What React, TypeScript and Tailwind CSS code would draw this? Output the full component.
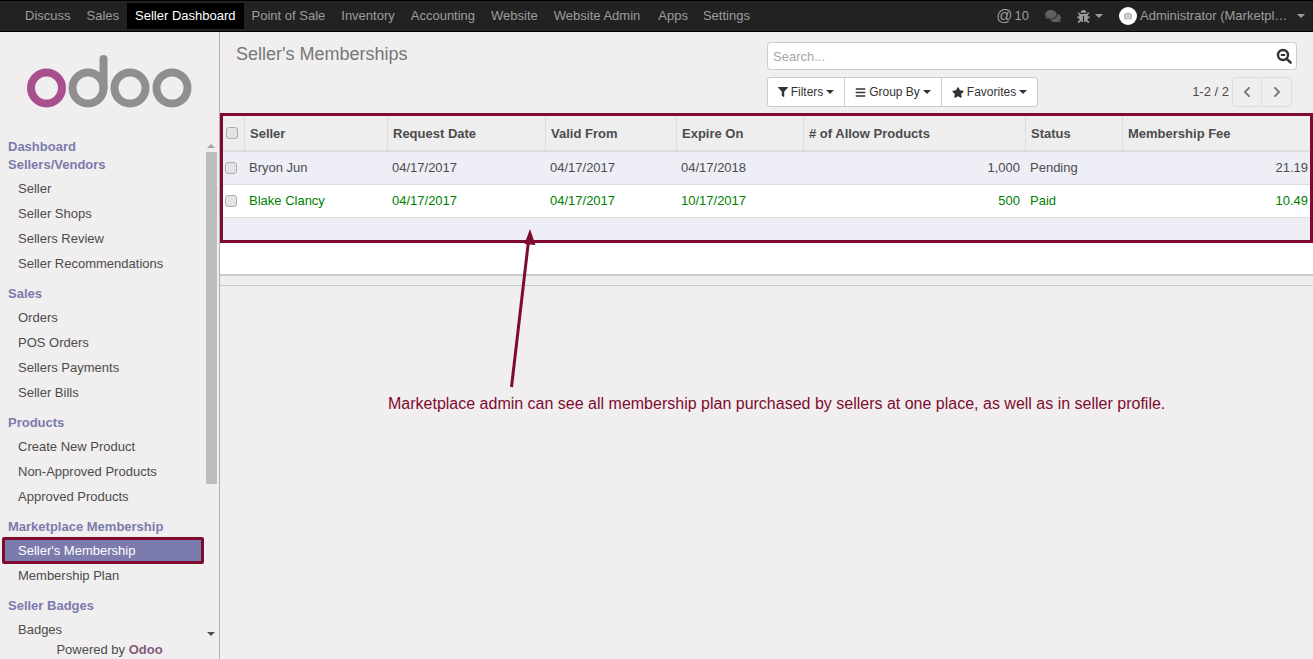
import React from "react";
import { FaComments, FaBug, FaFilter, FaBars, FaStar, FaChevronLeft, FaChevronRight, FaCamera } from "react-icons/fa";

const RED = "#7f0b2e";

function Caret({ className = "" }: { className?: string }) {
  return <span className={"inline-block w-0 h-0 border-x-[4px] border-x-transparent border-t-[4px] " + className} />;
}

function Logo() {
  return (
    <svg width="170" height="56" viewBox="0 0 170 56" className="block">
      <circle cx="19.5" cy="34" r="15.5" fill="none" stroke="#a8508f" strokeWidth="8" />
      <circle cx="61" cy="34" r="15.5" fill="none" stroke="#8f8f8f" strokeWidth="8" />
      <line x1="76.5" y1="34" x2="76.5" y2="5" stroke="#8f8f8f" strokeWidth="8" strokeLinecap="round" />
      <circle cx="103" cy="34" r="15.5" fill="none" stroke="#8f8f8f" strokeWidth="8" />
      <circle cx="145" cy="34" r="15.5" fill="none" stroke="#8f8f8f" strokeWidth="8" />
    </svg>
  );
}

function SearchGlyph() {
  return (
    <svg width="16" height="16" viewBox="0 0 16 16" className="block">
      <circle cx="7" cy="7" r="5" fill="none" stroke="#333333" strokeWidth="2.4" />
      <line x1="4.8" y1="7" x2="9.2" y2="7" stroke="#333333" strokeWidth="2" />
      <line x1="10.8" y1="10.8" x2="14.6" y2="14.6" stroke="#333333" strokeWidth="2.6" strokeLinecap="round" />
    </svg>
  );
}

const navItems = ["Discuss", "Sales", "Seller Dashboard", "Point of Sale", "Inventory", "Accounting", "Website", "Website Admin", "Apps", "Settings"];

const sideGroups: { titles: string[]; items: string[] }[] = [
  { titles: ["Dashboard", "Sellers/Vendors"], items: ["Seller", "Seller Shops", "Sellers Review", "Seller Recommendations"] },
  { titles: ["Sales"], items: ["Orders", "POS Orders", "Sellers Payments", "Seller Bills"] },
  { titles: ["Products"], items: ["Create New Product", "Non-Approved Products", "Approved Products"] },
  { titles: ["Marketplace Membership"], items: ["Seller's Membership", "Membership Plan"] },
  { titles: ["Seller Badges"], items: ["Badges"] },
];

const headers = ["Seller", "Request Date", "Valid From", "Expire On", "# of Allow Products", "Status", "Membership Fee"];
const rows = [
  { cells: ["Bryon Jun", "04/17/2017", "04/17/2017", "04/17/2018", "1,000", "Pending", "21.19"], cls: "bg-[#eeeef6] text-[#4c4c4c]" },
  { cells: ["Blake Clancy", "04/17/2017", "04/17/2017", "10/17/2017", "500", "Paid", "10.49"], cls: "bg-white text-[#008000]" },
];

function Check() {
  return <span className="block w-[12px] h-[12px] rounded-[3px] border border-[#adadad] bg-[#e4e4e4]" />;
}

function navExtra(n: string) {
  if (n === "Seller Dashboard") return "bg-black text-white w-[116.5px] whitespace-nowrap";
  if (n === "Apps") return "ml-[2px]";
  if (n === "Settings") return "-ml-[1px]";
  return "";
}

function TopNav() {
  return (
    <header className="h-[32px] shrink-0 flex items-center justify-between bg-[#222222] border-y border-black text-[13px] text-[#9d9d9d]">
      <nav className="flex items-center pl-[17px]">
        {navItems.map((n) => (
          <span key={n} className={"h-[26px] leading-[26px] px-[8px] " + navExtra(n)}>
            {n}
          </span>
        ))}
      </nav>
      <div className="flex items-center pr-[8px]">
        <span className="flex items-center gap-[2px]">
          <span className="text-[16px] leading-none">@</span>10
        </span>
        <FaComments className="ml-[16px] w-[16px] h-[14px] text-[#5f5f5f]" />
        <FaBug className="ml-[16px] w-[13px] h-[13px]" />
        <Caret className="ml-[5px] border-t-[#9d9d9d]" />
        <span className="ml-[16px] w-[18px] h-[18px] rounded-full bg-white flex items-center justify-center">
          <FaCamera className="w-[8px] h-[8px] text-[#bdbdbd]" />
        </span>
        <span className="ml-[3px] w-[147px] whitespace-nowrap">Administrator (Marketpl…</span>
        <Caret className="ml-[10px] border-t-[#9d9d9d]" />
      </div>
    </header>
  );
}

function Scrollbar() {
  return (
    <div className="w-[14px] shrink-0 flex flex-col items-center pt-[7px] mr-[1px]">
      <span className="w-0 h-0 border-x-[4px] border-x-transparent border-b-[4px] border-b-[#a3a3a3]" />
      <span className="mt-[4px] w-[11px] h-[332px] bg-[#bdbdbd]" />
      <span className="mt-auto mb-[6px] w-0 h-0 border-x-[4px] border-x-transparent border-t-[4px] border-t-[#505050]" />
    </div>
  );
}

function Sidebar() {
  return (
    <aside className="w-[220px] shrink-0 flex flex-col bg-[#f0eeee] border-r border-[#b0b0b0] overflow-hidden">
      <div className="h-[105px] shrink-0 pl-[27px] pt-[22px]">
        <Logo />
      </div>
      <div className="h-[505px] shrink-0 flex">
        <div className="flex-1 min-w-0">
          {sideGroups.map((g, i) => (
            <div key={i} className={i === 0 ? "" : "mt-[8px]"}>
              <div className="mb-[3px]">
                {g.titles.map((t) => (
                  <div key={t} className="h-[18px] leading-[20px] pl-[8px] text-[13px] font-bold text-[#7c7bad]">
                    {t}
                  </div>
                ))}
              </div>
              {g.items.map((it) =>
                it === "Seller's Membership" ? (
                  <div key={it} className="ml-[2px] -my-[1px] relative h-[27px] leading-[21px] pl-[13px] border-[3px] border-[#7f0b2e] rounded-[2px] bg-[#7c7bad] text-[13px] text-white">
                    {it}
                  </div>
                ) : (
                  <div key={it} className="h-[25px] leading-[25px] pl-[18px] text-[13px] text-[#4c4c4c]">
                    {it}
                  </div>
                )
              )}
            </div>
          ))}
        </div>
        <Scrollbar />
      </div>
      <div className="text-center text-[13px] leading-[15px] text-[#4c4c4c]">
        Powered by <span className="font-bold text-[#875a7b]">Odoo</span>
      </div>
    </aside>
  );
}

function ControlPanel() {
  return (
    <div className="h-[84px] shrink-0 flex bg-[#f0eeee] border-b border-[#cccccc]">
      <h1 className="w-[547px] shrink-0 pl-[16px] pt-[10px] text-[18px] leading-[24px] text-[#777777] font-normal">Seller's Memberships</h1>
      <div className="flex-1 pt-[10px] pr-[16px]">
        <div className="h-[28px] bg-white border border-[#cccccc] rounded-[4px] flex items-center justify-between pl-[5px] pr-[4px] text-[13px] leading-[28px] text-[#a5a5a5]">
          <span className="pt-[1px]">Search...</span>
          <SearchGlyph />
        </div>
        <div className="mt-[7px] flex items-center pr-[5px]">
          <div className="flex h-[30px] bg-white border border-[#cccccc] rounded-[3px] text-[12px] text-[#333333]">
            <span className="w-[77px] flex items-center justify-center gap-[3px] border-r border-[#cccccc]">
              <FaFilter className="w-[10px] h-[10px]" /> Filters <Caret className="border-t-[#333333]" />
            </span>
            <span className="w-[97px] flex items-center justify-center gap-[3px] border-r border-[#cccccc]">
              <FaBars className="w-[11px] h-[11px]" /> Group By <Caret className="border-t-[#333333]" />
            </span>
            <span className="w-[95px] flex items-center justify-center gap-[3px]">
              <FaStar className="w-[12px] h-[11px]" /> Favorites <Caret className="border-t-[#333333]" />
            </span>
          </div>
          <span className="ml-auto text-[13px] text-[#4c4c4c] pr-[3px] -mt-[1px]">1-2 / 2</span>
          <div className="flex h-[30px] border border-[#dddddd] rounded-[3px] text-[#777777]">
            <span className="w-[29px] flex items-center justify-center border-r border-[#dddddd]">
              <FaChevronLeft className="w-[12px] h-[12px]" />
            </span>
            <span className="w-[29px] flex items-center justify-center">
              <FaChevronRight className="w-[12px] h-[12px]" />
            </span>
          </div>
        </div>
      </div>
    </div>
  );
}

function DataTable() {
  const widths = [24, 143, 158, 131, 127, 222, 97, 191];
  return (
    <table className="w-[1093px] table-fixed border-collapse text-[13px] text-[#4c4c4c]">
      <colgroup>
        {widths.map((w, i) => (
          <col key={i} style={{ width: w }} />
        ))}
      </colgroup>
      <thead>
        <tr className="h-[35px] bg-[#eeeeee] border-b-2 border-[#dddddd]">
          <th className="p-0 pl-[6px]">
            <Check />
          </th>
          {headers.map((h) => (
            <th key={h} className="p-0 pt-[2px] pl-[5.5px] text-left font-bold border-l border-[#dddddd]">
              {h}
            </th>
          ))}
        </tr>
      </thead>
      <tbody>
        {rows.map((r) => (
          <tr key={r.cells[0]} className={"h-[33px] border-b border-[#dddddd] " + r.cls}>
            <td className="p-0 pl-[5px]">
              <Check />
            </td>
            {r.cells.map((c, i) => (
              <td key={i} className={"p-0 px-[5px] " + (i === 4 || i === 6 ? "text-right" : "text-left")}>
                {c}
              </td>
            ))}
          </tr>
        ))}
      </tbody>
      <tfoot>
        <tr className="h-[25px] bg-[#eeeef6]">
          <td colSpan={8} className="p-0" />
        </tr>
      </tfoot>
    </table>
  );
}

export default function App() {
  return (
    <div className="h-screen w-full flex flex-col overflow-hidden bg-[#f0eeee] font-['Liberation_Sans',Arial,sans-serif]">
      <TopNav />
      <div className="flex-1 min-h-0 flex">
        <Sidebar />
        <main className="relative flex-1 min-w-0 flex flex-col">
          <ControlPanel />
          <div className="h-[160px] shrink-0 bg-white border-b-2 border-[#cccccc]">
            <DataTable />
          </div>
          <div className="h-[10px] shrink-0 bg-[#eeeeee] border-b border-[#cccccc]" />
          <div className="pl-[168px] pt-[108px] text-[16px] leading-[20px] text-[#7f0b2e] whitespace-nowrap">
            Marketplace admin can see all membership plan purchased by sellers at one place, as well as in seller profile.
          </div>

          <div className="pointer-events-none absolute left-0 right-0 top-[81px] h-[130px] border-[3px] border-[#7f0b2e]" />
          <svg className="pointer-events-none absolute left-[280px] top-[195px]" width="40" height="165" viewBox="0 0 40 165">
            <line x1="11.5" y1="160" x2="28.5" y2="14" stroke={RED} strokeWidth="3" />
            <polygon points="30,2 35.5,18 24.5,17" fill={RED} />
          </svg>
        </main>
      </div>
    </div>
  );
}
